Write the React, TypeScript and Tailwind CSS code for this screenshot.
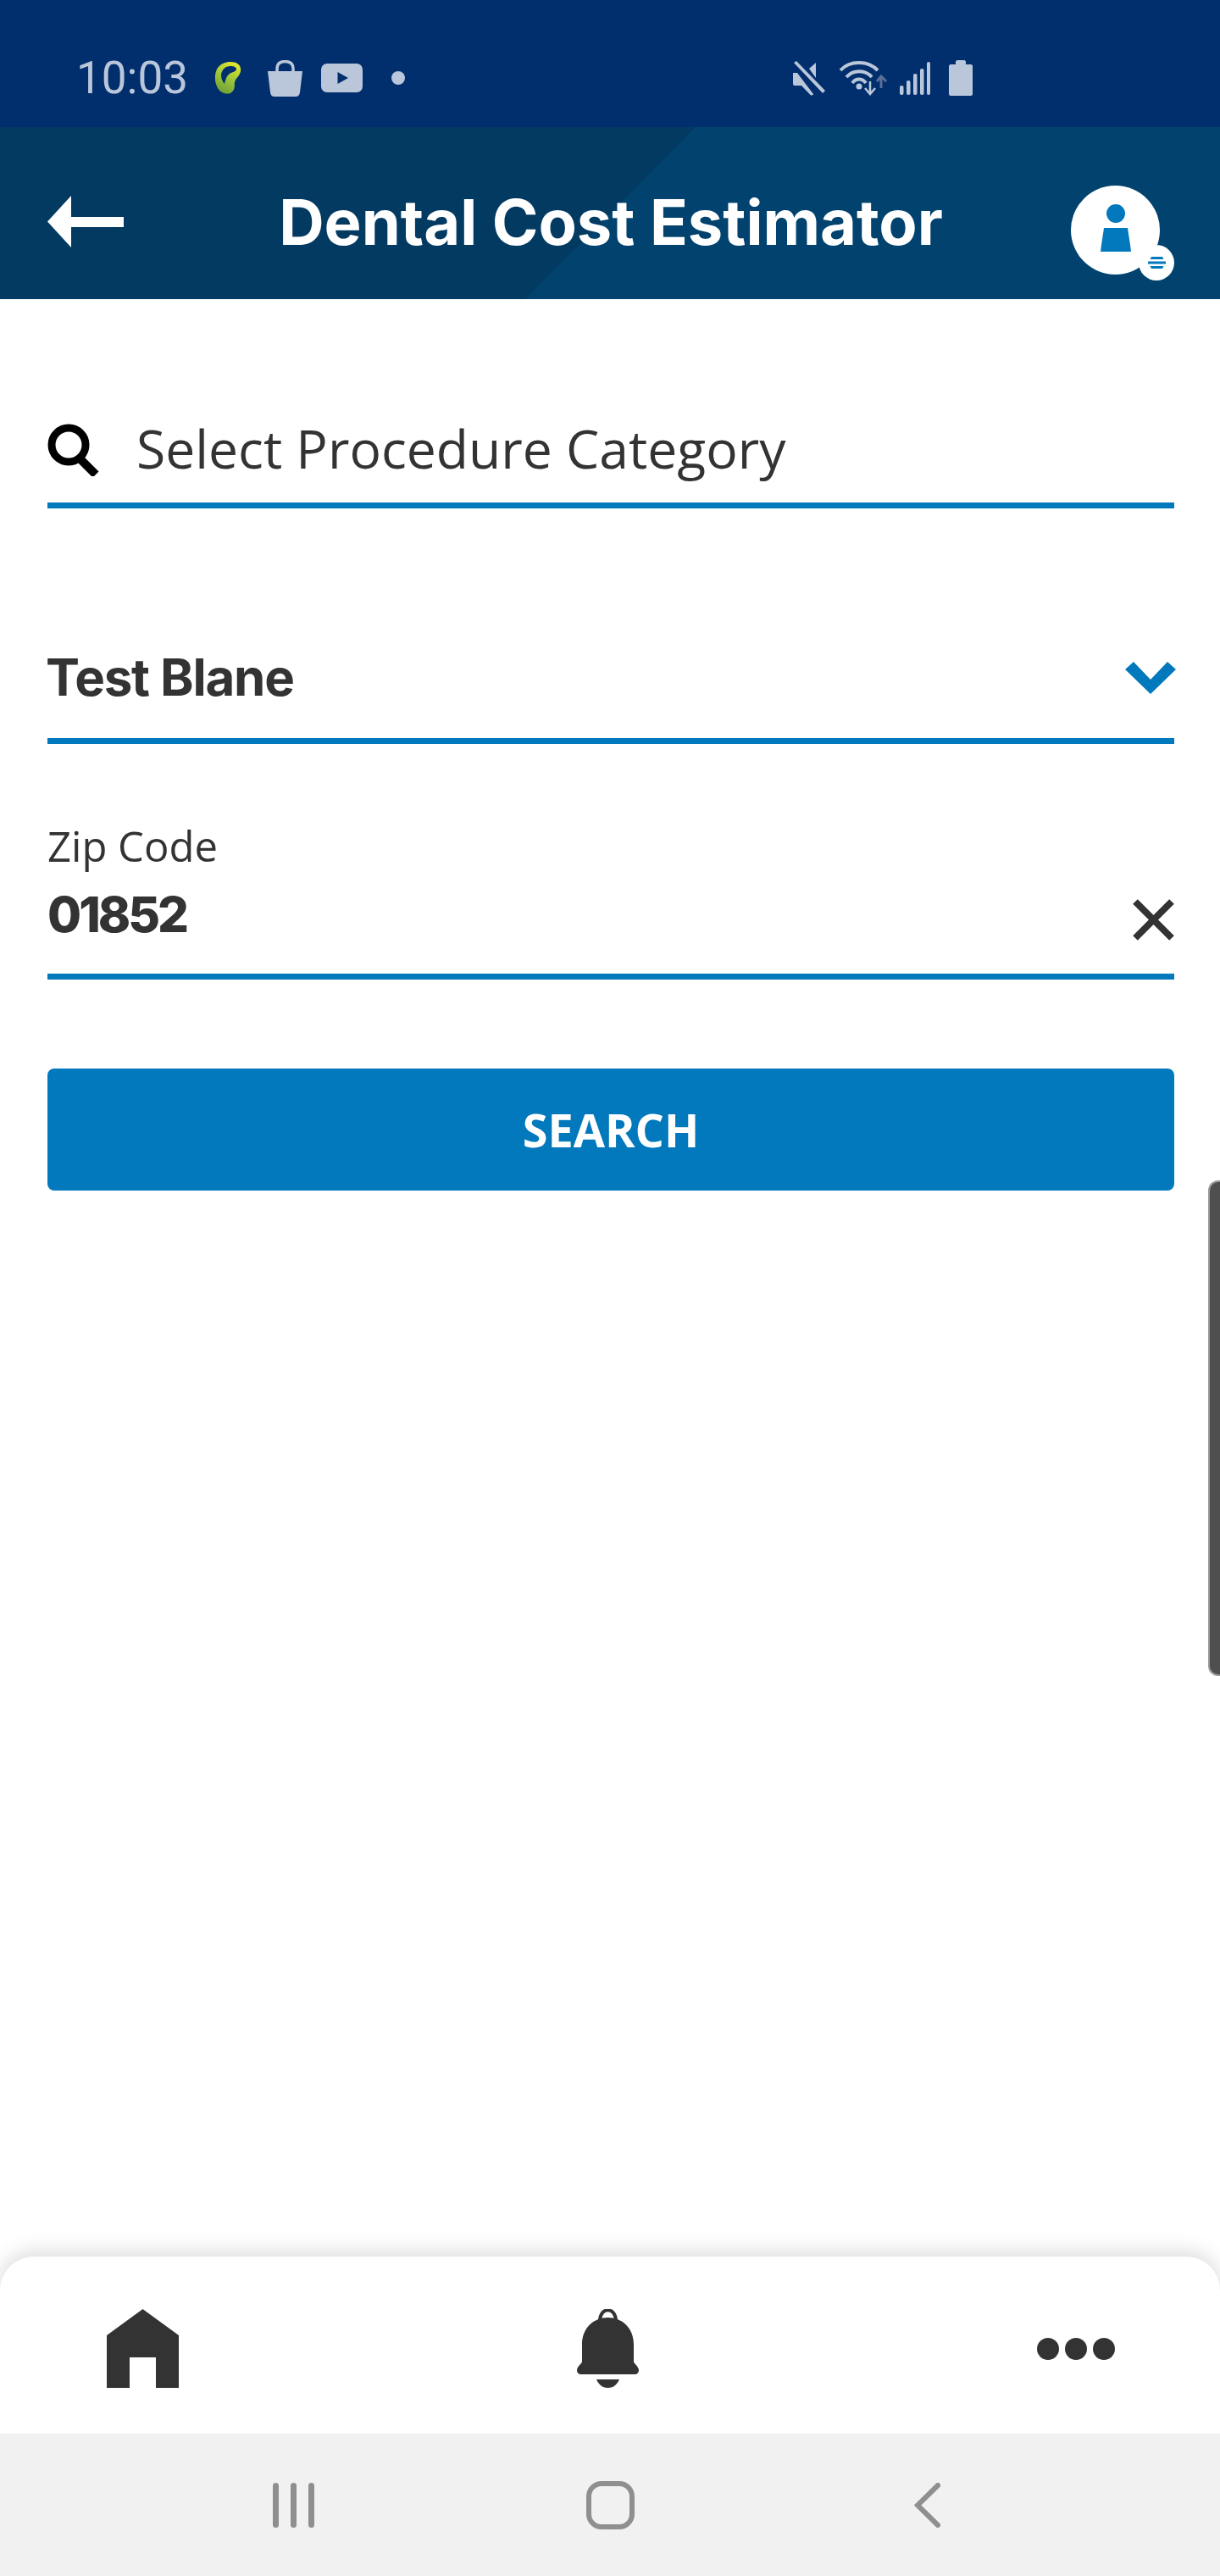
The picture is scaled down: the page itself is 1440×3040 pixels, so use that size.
import React from "react";

const sans = "font-['Open_Sans','Noto_Sans',sans-serif]";
const inter = "font-['Inter','Liberation_Sans',sans-serif]";

// --- Status bar icons ---
const LeafIcon = () => (
  <svg width="32" height="38" viewBox="0 0 32 38">
    <defs>
      <linearGradient id="leaf" x1="0.7" y1="0" x2="0.3" y2="1">
        <stop offset="0" stopColor="#e3e62c" />
        <stop offset="0.5" stopColor="#9cc63a" />
        <stop offset="1" stopColor="#6fa035" />
      </linearGradient>
    </defs>
    <path
      fill="url(#leaf)"
      fillRule="evenodd"
      d="M19 0C27 0 32 4 31 11C30 17 25 19 24 24C23.500 29 25 33 19 37C13 39 6 36 3 29C0 22 0 13 4 7C8 2 13 0 19 0ZM19 5C13 5 9 9 8 15C8 19 9 23 12 26C13 22 14 17 18 14C21 12 25 12 26 9C26 6 23 5 19 5Z"
    />
  </svg>
);

const BagIcon = () => (
  <svg width="41" height="43" viewBox="0 0 41 43" fill="#bac6da">
    <path d="M0 13H41L38 38C37.700 41 36 43 33 43H8C5 43 3.300 41 3 38Z" />
    <path d="M11 14V10C11 4 15 1.500 20.500 1.500C26 1.500 30 4 30 10V14" fill="none" stroke="#bac6da" strokeWidth="3.500" />
  </svg>
);

const YoutubeIcon = () => (
  <svg width="49" height="34" viewBox="0 0 49 34">
    <rect width="49" height="34" rx="7" fill="#bac6da" />
    <path d="M19.500 10V24L32 17Z" fill="#012f6d" />
  </svg>
);

const MuteIcon = () => (
  <svg width="38" height="41" viewBox="0 0 38 41" fill="#bac6da">
    <path d="M0 14H5L24 39C23 41 21 41 20 39.500L10 29H2C1 29 0 28 0 27Z" />
    <path d="M19 9L27 2V20Z" />
    <path d="M1 2L4 0L38 35L35 38Z" />
  </svg>
);

const WifiIcon = () => (
  <svg width="58" height="42" viewBox="0 0 58 42" fill="none">
    <path d="M2 12C13 0 34 0 46 12" stroke="#bac6da" strokeWidth="4" />
    <path d="M9 20C17 11 31 11 39 20" stroke="#bac6da" strokeWidth="4" />
    <path d="M16 27C20 21 28 21 32 27" stroke="#bac6da" strokeWidth="4" />
    <circle cx="24" cy="31" r="3.500" fill="#bac6da" />
    <path d="M37 25V39M31 33L37 40L43 33" stroke="#bac6da" strokeWidth="2.500" />
    <path d="M50 33V19M45 25L50 19L56 25" stroke="#5b7098" strokeWidth="3" />
  </svg>
);

const SignalIcon = () => (
  <svg width="36" height="39" viewBox="0 0 36 39" fill="#bac6da">
    <rect x="0" y="28" width="4.500" height="11" rx="2" />
    <rect x="8" y="22" width="4.500" height="17" rx="2" />
    <rect x="16" y="14" width="4.500" height="25" rx="2" />
    <rect x="24" y="8" width="4.500" height="31" rx="2" />
    <rect x="32" y="0" width="4" height="39" rx="2" />
  </svg>
);

const BatteryIcon = () => (
  <svg width="28" height="42" viewBox="0 0 28 42" fill="#bac6da">
    <path d="M8 2C8 1 9 0 10 0H18C19 0 20 1 20 2V5H26C27 5 28 6 28 7V40C28 41 27 42 26 42H2C1 42 0 41 0 40V7C0 6 1 5 2 5H8Z" />
  </svg>
);

// --- Header icons ---
const BackArrow = () => (
  <svg width="90" height="61" viewBox="0 0 90 61" fill="#fff">
    <path d="M28 0V25H90V37H28V61L0 30.500Z" />
  </svg>
);

const Avatar = () => (
  <div className="relative mt-[26px] h-[112px] w-[122px]">
    <div className="flex h-[105px] w-[105px] flex-col items-center rounded-full bg-white pt-[22px]">
      <div className="h-[22px] w-[22px] rounded-full bg-[#0279bd]" />
      <svg width="36" height="28" viewBox="0 0 36 28" className="mt-[6px]" fill="#0279bd">
        <path d="M4 0H32C33 8 35 18 36 28H0C1 18 3 8 4 0Z" />
      </svg>
    </div>
    {/* menu badge */}
    <div className="absolute right-0 bottom-0 flex h-[42px] w-[42px] items-center justify-center rounded-full bg-white">
      <svg width="21" height="14" viewBox="0 0 21 14" fill="#0279bd">
        <path d="M4 0H17L18.500 3H2.500Z" />
        <rect x="0" y="5.500" width="21" height="3" />
        <path d="M2.500 11H18.500L17 14H4Z" />
      </svg>
    </div>
  </div>
);

// --- Bottom icons ---
const HomeIcon = () => (
  <svg width="85" height="93" viewBox="0 0 85 93" fill="#333">
    <path d="M42.500 0L85 31V93H58V57H27V93H0V31Z" />
  </svg>
);

const BellIcon = () => (
  <svg width="73" height="93" viewBox="0 0 73 93" fill="#333">
    <path d="M36.500 10C20 10 6 22 6 42V62C6 64 0 68 0 72C0 75 2 77 5 77H68C71 77 73 75 73 72C73 68 67 64 67 62V42C67 22 53 10 36.500 10Z" />
    <path d="M27 14C27 -3 46 -3 46 14" fill="none" stroke="#333" strokeWidth="4" />
    <path d="M23 83H50C47 90 42 93 36.500 93C31 93 26 90 23 83Z" />
  </svg>
);

export default function App() {
  return (
    <div className={`relative flex h-[3040px] w-[1440px] flex-col overflow-hidden bg-white ${sans}`}>
      {/* Status bar */}
      <div className="flex h-[150px] shrink-0 items-center bg-[#012f6d] pt-[34px] pl-[90px] text-[#bac6da]">
        <span className="w-[163px] font-['Roboto'] text-[53px] leading-none font-normal">10:03</span>
        <LeafIcon />
        <div className="ml-[31px]"><BagIcon /></div>
        <div className="ml-[22px]"><YoutubeIcon /></div>
        <div className="ml-[34px] h-[16px] w-[16px] rounded-full bg-[#bac6da]" />
        <div className="ml-[458px]"><MuteIcon /></div>
        <div className="ml-[16px]"><WifiIcon /></div>
        <div className="ml-[14px]"><SignalIcon /></div>
        <div className="ml-[22px]"><BatteryIcon /></div>
      </div>

      {/* App header */}
      <div className="relative flex h-[203px] shrink-0 items-center bg-[#033a61] pt-[20px] pl-[56px] pr-[54px]">
        <div className="absolute inset-0 bg-[#01436e] [clip-path:polygon(821px_0,100%_0,100%_100%,620px_100%)]" />
        <div className="relative w-[122px]"><BackArrow /></div>
        <h1 className={`relative flex-1 text-center text-[74px] leading-none font-bold text-white ${inter}`}>
          Dental Cost Estimator
        </h1>
        <Avatar />
      </div>

      {/* Form */}
      <div className="flex flex-col pt-[140px] pr-[54px] pl-[56px]">
        <div className="flex h-[107px] items-center border-b-[7px] border-[#0279bd] pb-[24px]">
          <svg width="63" height="62" viewBox="0 0 63 62" fill="none" stroke="#000">
            <circle cx="25" cy="25" r="20" strokeWidth="9" />
            <path d="M37 40L57 60" strokeWidth="10" />
          </svg>
          <span className="mt-[-3px] ml-[42px] text-[62.400px] leading-none text-[#333]">Select Procedure Category</span>
        </div>

        <div className="mt-[150px] flex h-[128px] items-center justify-between border-b-[7px] border-[#0279bd] pb-[21px]">
          <span className={`mt-[-3px] ml-[-2px] text-[60px] leading-none font-bold tracking-[-1.200px] text-[#333] ${inter}`}>Test Blane</span>
          <svg width="60" height="38" viewBox="0 0 60 38" fill="#0279bd" className="mr-[-2px]">
            <path d="M10 0L30 21L50 0L60 9L30 38L0 9Z" />
          </svg>
        </div>

        <div className="mt-[90px] flex flex-col border-b-[7px] border-[#0279bd] pb-[35px]">
          <span className="mt-[2px] mb-[-2px] text-[49px] leading-[56px] text-[#333]">Zip Code</span>
          <div className="mt-[20px] flex h-[70px] items-center justify-between">
            <span className={`text-[58px] leading-[70px] font-extrabold tracking-[-3px] text-[#333] ${inter}`}>01852</span>
            <svg width="49" height="49" viewBox="0 0 49 49" stroke="#333" strokeWidth="8" className="mt-[12px]">
              <path d="M3 3L46 46M46 3L3 46" />
            </svg>
          </div>
        </div>

        <button className="mt-[105px] flex h-[144px] items-center justify-center rounded-lg bg-[#0279bd] text-[54px] font-bold text-white">
          SEARCH
        </button>
      </div>

      <div className="flex-1" />

      {/* Bottom tabs */}
      <div className="relative flex h-[209px] shrink-0 items-center justify-between rounded-t-[40px] bg-white pt-[8px] pr-[124px] pl-[126px] shadow-[0_-6px_24px_rgba(0,0,0,0.14)]">
        <HomeIcon />
        <BellIcon />
        <div className="flex gap-[7px]">
          <div className="h-[26px] w-[26px] rounded-full bg-[#333]" />
          <div className="h-[26px] w-[26px] rounded-full bg-[#333]" />
          <div className="h-[26px] w-[26px] rounded-full bg-[#333]" />
        </div>
      </div>

      {/* System navigation */}
      <div className="relative flex h-[168px] shrink-0 items-center justify-center bg-[#f1f1f1]">
        <div className="flex w-[374px] justify-center gap-[14px]">
          <div className="h-[53px] w-[7px] rounded-full bg-[#8f8f8f]" />
          <div className="h-[53px] w-[7px] rounded-full bg-[#8f8f8f]" />
          <div className="h-[53px] w-[7px] rounded-full bg-[#8f8f8f]" />
        </div>
        <div className="flex w-[374px] justify-center">
          <div className="h-[57px] w-[57px] rounded-[18px] border-[6px] border-[#8f8f8f]" />
        </div>
        <div className="flex w-[374px] justify-center">
          <svg width="31" height="53" viewBox="0 0 31 53" fill="none" stroke="#8f8f8f" strokeWidth="6" strokeLinecap="round">
            <path d="M28 3L4 26.500L28 50" />
          </svg>
        </div>
      </div>

      {/* Edge panel handle */}
      <div className="absolute top-[1393px] right-0 h-[585px] w-[14px] rounded-l-[12px] border-y-2 border-l-2 border-[#9a9a9a] bg-[#4f4f4f]" />
    </div>
  );
}
